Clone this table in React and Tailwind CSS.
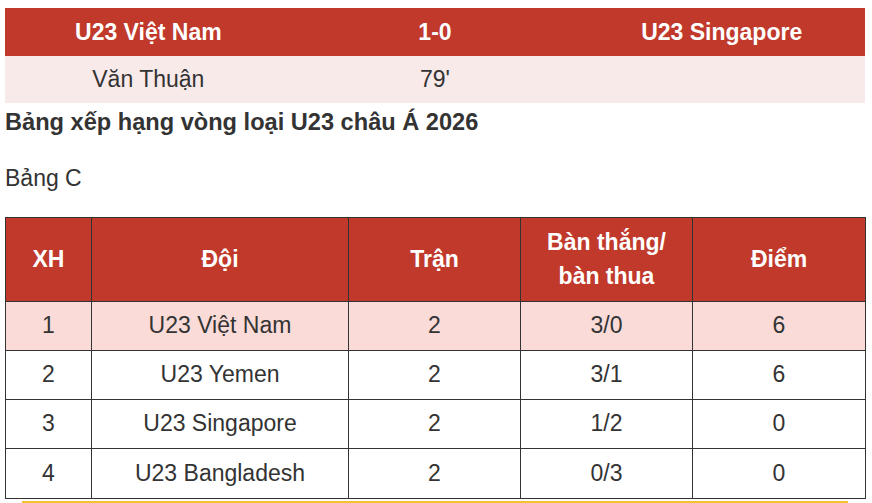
export default function App() {
  const rows = [
    ["1", "U23 Việt Nam", "2", "3/0", "6", true],
    ["2", "U23 Yemen", "2", "3/1", "6", false],
    ["3", "U23 Singapore", "2", "1/2", "0", false],
    ["4", "U23 Bangladesh", "2", "0/3", "0", false],
  ];
  return (
    <div
      className="w-[872px] h-[503px] overflow-hidden bg-white text-[#333] text-[23px] leading-[1.5] pt-[8px] pl-[5px]"
      style={{ fontFamily: '"Liberation Sans", Arial, sans-serif' }}
    >
      <table className="w-[860px] table-fixed border-collapse">
        <tbody>
          <tr className="bg-[#c0392b] text-white font-bold h-[48px]">
            <td className="text-center py-0">U23 Việt Nam</td>
            <td className="text-center py-0">1-0</td>
            <td className="text-center py-0">U23 Singapore</td>
          </tr>
          <tr className="bg-[#f9eaea] h-[47px]">
            <td className="text-center py-0">Văn Thuận</td>
            <td className="text-center py-0">79'</td>
            <td className="text-center py-0"></td>
          </tr>
        </tbody>
      </table>
      <p className="font-bold m-0 pt-[2px] text-[23.6px] leading-[34px]">Bảng xếp hạng vòng loại U23 châu Á 2026</p>
      <p className="mt-[22px] mb-[21px]">Bảng C</p>
      <table className="w-[860px] table-fixed border-collapse">
        <colgroup>
          <col className="w-[86px]" />
          <col className="w-[257px]" />
          <col className="w-[172px]" />
          <col className="w-[172px]" />
          <col className="w-[173px]" />
        </colgroup>
        <thead>
          <tr className="bg-[#c0392b] text-white font-bold h-[84px]">
            <th className="border border-[#333] text-center font-bold">XH</th>
            <th className="border border-[#333] text-center font-bold">Đội</th>
            <th className="border border-[#333] text-center font-bold">Trận</th>
            <th className="border border-[#333] text-center font-bold">
              Bàn thắng/
              <br />
              bàn thua
            </th>
            <th className="border border-[#333] text-center font-bold">Điểm</th>
          </tr>
        </thead>
        <tbody>
          {rows.map((r, idx) => (
            <tr
              key={r[0]}
              className={`${idx === 3 ? "h-[50px]" : "h-[49px]"} ${r[5] ? "bg-[#fadbd8]" : "bg-white"}`}
            >
              {r.slice(0, 5).map((c, i) => (
                <td key={i} className="border border-[#333] text-center p-0">
                  {c}
                </td>
              ))}
            </tr>
          ))}
        </tbody>
      </table>
      <div className="ml-[17px] mt-[2px] w-[826px] h-[40px] border-2 border-[#f5c330] bg-[#fffbea]"></div>
    </div>
  );
}
